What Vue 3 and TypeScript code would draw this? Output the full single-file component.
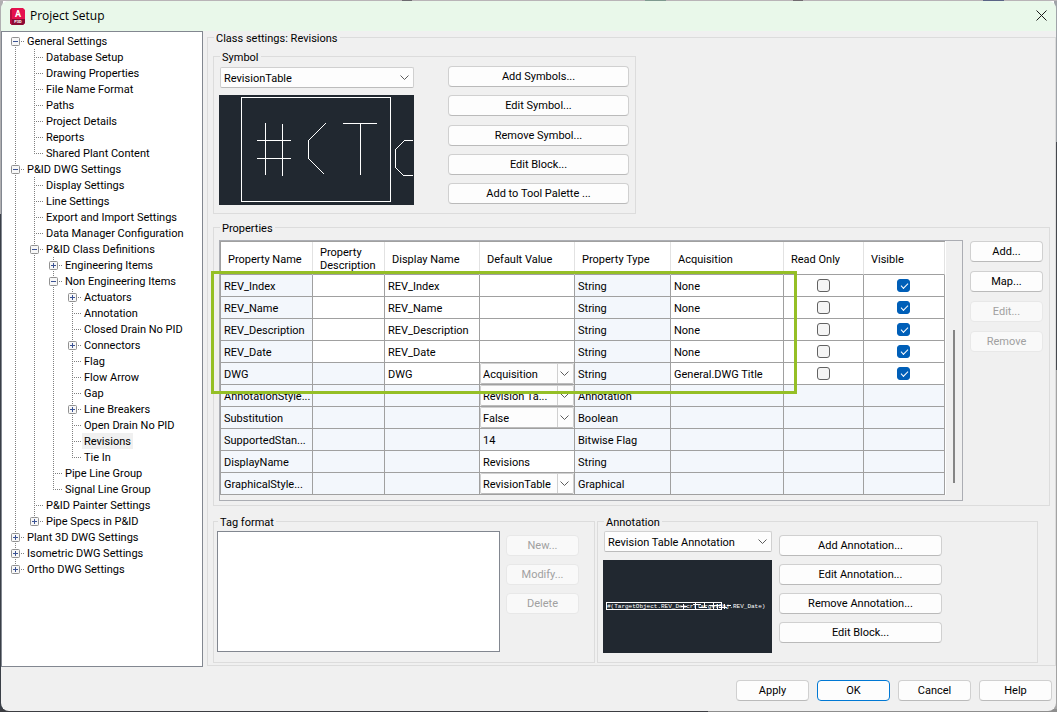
<script setup lang="ts">
import { ref } from 'vue'

interface TreeNode {
  label: string
  children?: TreeNode[]
  collapsed?: boolean
}

interface TreeRow {
  label: string
  level: number
  box: '' | 'plus' | 'minus'
  rails: boolean[]
  up: boolean
  down: boolean
}

interface PropertyRow {
  name: string
  display: string
  value: string
  type: string
  acquisition: string
  shaded: string
  combo?: boolean
  checks?: boolean
}

const leaf = (label: string): TreeNode => ({ label })
const closed = (label: string): TreeNode => ({ label, collapsed: true })

const tree: TreeNode[] = [
  {
    label: 'General Settings',
    children: [
      leaf('Database Setup'),
      leaf('Drawing Properties'),
      leaf('File Name Format'),
      leaf('Paths'),
      leaf('Project Details'),
      leaf('Reports'),
      leaf('Shared Plant Content'),
    ],
  },
  {
    label: 'P&ID DWG Settings',
    children: [
      leaf('Display Settings'),
      leaf('Line Settings'),
      leaf('Export and Import Settings'),
      leaf('Data Manager Configuration'),
      {
        label: 'P&ID Class Definitions',
        children: [
          closed('Engineering Items'),
          {
            label: 'Non Engineering Items',
            children: [
              closed('Actuators'),
              leaf('Annotation'),
              leaf('Closed Drain No PID'),
              closed('Connectors'),
              leaf('Flag'),
              leaf('Flow Arrow'),
              leaf('Gap'),
              closed('Line Breakers'),
              leaf('Open Drain No PID'),
              leaf('Revisions'),
              leaf('Tie In'),
            ],
          },
          leaf('Pipe Line Group'),
          leaf('Signal Line Group'),
        ],
      },
      leaf('P&ID Painter Settings'),
      closed('Pipe Specs in P&ID'),
    ],
  },
  closed('Plant 3D DWG Settings'),
  closed('Isometric DWG Settings'),
  closed('Ortho DWG Settings'),
]

function flatten(nodes: TreeNode[], level: number, rails: boolean[]): TreeRow[] {
  return nodes.flatMap((node, i) => {
    const down = i < nodes.length - 1
    const row: TreeRow = {
      label: node.label,
      level,
      box: node.collapsed ? 'plus' : node.children ? 'minus' : '',
      rails,
      up: level > 0 || i > 0,
      down,
    }
    return [row, ...flatten(node.children ?? [], level + 1, [...rails, down])]
  })
}

const treeRows = flatten(tree, 0, [])
const selected = ref('Revisions')

const headers = [
  'Property Name',
  'Property Description',
  'Display Name',
  'Default Value',
  'Property Type',
  'Acquisition',
  'Read Only',
  'Visible',
]

/* "shaded" holds one flag per column: 1 for a locked cell, 0 for an editable one. */
const rev = (name: string): PropertyRow => ({
  name, display: name, value: '', type: 'String', acquisition: 'None', shaded: '10001000', checks: true,
})
const locked = (name: string, value: string, type: string, combo = false, shaded = '11111111'): PropertyRow => ({
  name, display: '', value, type, acquisition: '', shaded, combo,
})

const properties: PropertyRow[] = [
  rev('REV_Index'),
  rev('REV_Name'),
  rev('REV_Description'),
  rev('REV_Date'),
  { name: 'DWG', display: 'DWG', value: 'Acquisition', type: 'String', acquisition: 'General.DWG Title', shaded: '11001000', combo: true, checks: true },
  locked('AnnotationStyle...', 'Revision Ta...', 'Annotation', true),
  locked('Substitution', 'False', 'Boolean', true),
  locked('SupportedStan...', '14', 'Bitwise Flag'),
  locked('DisplayName', 'Revisions', 'String', false, '11101111'),
  locked('GraphicalStyle...', 'RevisionTable', 'Graphical', true),
]

const tone = (row: PropertyRow, col: number) => ({ shaded: row.shaded[col] === '1' })

const symbolButtons = ['Add Symbols...', 'Edit Symbol...', 'Remove Symbol...', 'Edit Block...', 'Add to Tool Palette ...']
const annotationButtons = ['Add Annotation...', 'Edit Annotation...', 'Remove Annotation...', 'Edit Block...']
</script>

<template>
  <div class="desktop">
    <div class="dialog" role="dialog" aria-labelledby="dialog-title">
      <header class="titlebar">
        <svg class="logo" width="15" height="17" viewBox="0 0 15 17" aria-hidden="true">
          <path d="M2 0H13L15 2V15L13 17H2L0 15V2Z" fill="#e5114e" />
          <path d="M0 11H15V15L13 17H2L0 15Z" fill="#8c0b34" />
          <path d="M0 2L2 0V17L0 15Z" fill="#b80c40" />
          <text x="8" y="9" class="logo-letter">A</text>
          <text x="8" y="15" class="logo-code">P3D</text>
        </svg>
        <h1 id="dialog-title">Project Setup</h1>
        <button class="close" type="button" aria-label="Close">
          <svg width="11" height="11" viewBox="0 0 11 11"><path d="M0.5 0.5L10.5 10.5M10.5 0.5L0.5 10.5" stroke="#1a1a1a" fill="none" /></svg>
        </button>
      </header>

      <div class="body">
        <div class="tree" role="tree" aria-label="Settings">
          <div
            v-for="row in treeRows"
            :key="row.label"
            class="tree-row"
            role="treeitem"
            :aria-level="row.level + 1"
            :aria-selected="row.label === selected"
            :aria-expanded="row.box ? row.box === 'minus' : undefined"
            @click="selected = row.label"
          >
            <span v-for="(rail, i) in row.rails" :key="i" class="guide" :class="{ up: rail, down: rail }"></span>
            <span class="guide stub" :class="{ up: row.up, down: row.down }">
              <svg v-if="row.box" class="box" width="9" height="9" viewBox="0 0 9 9" aria-hidden="true">
                <rect x="0.5" y="0.5" width="8" height="8" rx="1" fill="#f7f7f7" stroke="#919191" />
                <path d="M2 4.5H7" stroke="#3b5394" />
                <path v-if="row.box === 'plus'" d="M4.5 2V7" stroke="#3b5394" />
              </svg>
            </span>
            <span class="tree-label" :class="{ selected: row.label === selected }">{{ row.label }}</span>
          </div>
        </div>

        <fieldset class="group settings">
          <legend>Class settings: Revisions</legend>

          <fieldset class="group symbol">
            <legend>Symbol</legend>
            <div class="preview-column symbol-preview">
              <div class="combo">
                <select aria-label="Symbol"><option>RevisionTable</option></select>
                <svg class="chevron" width="9" height="5" viewBox="0 0 9 5" aria-hidden="true"><path d="M0.5 0.5L4.5 4.5L8.5 0.5" /></svg>
              </div>
              <svg class="drawing" width="195" height="110" viewBox="0 0 195 110" role="img" aria-label="Symbol preview">
                <rect width="195" height="110" fill="#212830" />
                <g fill="none" stroke="#fff" shape-rendering="crispEdges">
                  <path d="M22.5 2.5H171.5V106.5H22.5Z" />
                  <path d="M46.5 28V80M63.5 29V81M38 45.5H72M38 63.5H72" />
                  <path d="M106.5 28.5L89.5 45.5V63.5L105.5 79.5" />
                  <path d="M124 28.5H158M141.5 28V80" />
                  <path d="M194 45.5H185.5L176.5 54.5V72.5L184.5 80.5H194" />
                </g>
              </svg>
            </div>
            <div class="stack spread">
              <button v-for="label in symbolButtons" :key="label" type="button" class="btn">{{ label }}</button>
            </div>
          </fieldset>

          <fieldset class="group properties">
            <legend>Properties</legend>
            <div class="grid-frame">
              <table>
                <colgroup>
                  <col class="c-name" /><col class="c-desc" /><col class="c-text" /><col class="c-text" />
                  <col class="c-type" /><col class="c-acq" /><col class="c-check" /><col class="c-last" />
                </colgroup>
                <thead>
                  <tr><th v-for="h in headers" :key="h" scope="col">{{ h }}</th></tr>
                </thead>
                <tbody>
                  <tr v-for="row in properties" :key="row.name">
                    <td :class="tone(row, 0)">{{ row.name }}</td>
                    <td :class="tone(row, 1)"></td>
                    <td :class="tone(row, 2)">{{ row.display }}</td>
                    <td v-if="row.combo" class="combo-cell">
                      <div class="combo cell-combo">
                        <select :aria-label="row.name + ' default value'"><option>{{ row.value }}</option></select>
                        <svg class="chevron" width="9" height="5" viewBox="0 0 9 5" aria-hidden="true"><path d="M0.5 0.5L4.5 4.5L8.5 0.5" /></svg>
                      </div>
                    </td>
                    <td v-else :class="tone(row, 3)">{{ row.value }}</td>
                    <td :class="tone(row, 4)">{{ row.type }}</td>
                    <td :class="tone(row, 5)">{{ row.acquisition }}</td>
                    <td class="check" :class="tone(row, 6)">
                      <input v-if="row.checks" type="checkbox" :aria-label="row.name + ' read only'" />
                    </td>
                    <td class="check" :class="tone(row, 7)">
                      <input v-if="row.checks" type="checkbox" checked :aria-label="row.name + ' visible'" />
                    </td>
                  </tr>
                </tbody>
              </table>
              <div class="scrollbar"><div class="thumb"></div></div>
              <div class="highlight"></div>
            </div>
            <div class="stack wide-gap small">
              <button type="button" class="btn">Add...</button>
              <button type="button" class="btn">Map...</button>
              <button type="button" class="btn" disabled>Edit...</button>
              <button type="button" class="btn" disabled>Remove</button>
            </div>
          </fieldset>

          <div class="lower">
            <fieldset class="group tags">
              <legend>Tag format</legend>
              <select class="listbox" size="6" aria-label="Tag format"></select>
              <div class="stack small lowered">
                <button type="button" class="btn" disabled>New...</button>
                <button type="button" class="btn" disabled>Modify...</button>
                <button type="button" class="btn" disabled>Delete</button>
              </div>
            </fieldset>

            <fieldset class="group annotation">
              <legend>Annotation</legend>
              <div class="preview-column annotation-preview">
                <div class="combo">
                  <select aria-label="Annotation"><option>Revision Table Annotation</option></select>
                  <svg class="chevron" width="9" height="5" viewBox="0 0 9 5" aria-hidden="true"><path d="M0.5 0.5L4.5 4.5L8.5 0.5" /></svg>
                </div>
                <svg class="drawing" width="169" height="93" viewBox="0 0 169 93" role="img" aria-label="Annotation preview">
                  <rect width="169" height="93" fill="#212830" />
                  <g fill="none" stroke="#fff" shape-rendering="crispEdges">
                    <path d="M3.5 42.5H118.5V49.5H3.5Z" />
                    <path d="M78 46.5H84M80.5 44V49M90 44.5H98M92.5 43V49M96 47.5H104M101.5 43V48M106 45.5H118M110.5 43V49M114.5 44V49M116 47.5H124M121.5 44V49M124 45.5H128" />
                  </g>
                  <text x="4" y="48" class="plot">#(TargetObject.REV_Descr(TargetObj.REV_Date)</text>
                </svg>
              </div>
              <div class="stack lowered annotation-actions">
                <button v-for="label in annotationButtons" :key="label" type="button" class="btn">{{ label }}</button>
              </div>
            </fieldset>
          </div>
        </fieldset>
      </div>

      <footer class="footer">
        <button type="button" class="btn">Apply</button>
        <button type="button" class="btn primary">OK</button>
        <button type="button" class="btn">Cancel</button>
        <button type="button" class="btn">Help</button>
      </footer>
    </div>
  </div>
</template>

<style>
body {
  margin: 0;
}
</style>

<style scoped>
* {
  box-sizing: border-box;
}
.desktop {
  min-height: 100vh;
  padding: 1px;
  display: flex;
  flex-direction: column;
  background:
    linear-gradient(to right, #b9b4b7 0 38%, #6d6a70 38% 39%, #b9b4b7 39% 61%, #7f9a90 61% 63%, #b9b4b7 63% 75%, #716b70 75% 76%, #b9b4b7 76% 93%, #5b6486 93% 95%, #b9b4b7 95%) top / 100% 1px no-repeat,
    linear-gradient(to right, #3c3d42 0 67%, #8e8e8e 67%) bottom / 100% 3px no-repeat,
    linear-gradient(to bottom, #b0afb1 0 30%, #3a3f47 30%) left / 3px 100% no-repeat,
    linear-gradient(to bottom, #9fa3a8 0 20%, #45484e 20% 52%, #a3a3a3 52%) right / 3px 100% no-repeat;
  font-family: Roboto, "Liberation Sans", sans-serif;
  font-size: 11px;
  line-height: 13px;
  color: #000;
}
.dialog {
  flex: 1;
  display: flex;
  flex-direction: column;
  background: #f0f0f0;
  border-radius: 8px;
  overflow: hidden;
}
.titlebar {
  display: flex;
  align-items: center;
  height: 30px;
  padding: 0 9px;
  background: #e9f8ea;
}
.logo {
  margin-right: 5px;
}
.logo-letter,
.logo-code {
  fill: #fff;
  font-weight: 700;
  text-anchor: middle;
}
.logo-letter {
  font-size: 9px;
}
.logo-code {
  font-size: 4px;
}
h1 {
  margin: 0;
  flex: 1;
  font: 400 12px/16px "Open Sans", "Noto Sans", sans-serif;
}
.close {
  display: flex;
  padding: 0 0 2px;
  border: 0;
  background: none;
}
.body {
  flex: 1;
  display: flex;
}
.tree {
  flex: none;
  width: 202px;
  padding: 1px 0 0 4px;
  border: 1px solid #828790;
  background: #fff;
}
.tree-row {
  display: flex;
  height: 16px;
  white-space: nowrap;
}
.guide {
  --dots: repeating-linear-gradient(to bottom, #808080 0 1px, transparent 1px 2px);
  position: relative;
  flex: none;
  width: 19px;
}
.guide.up {
  background: var(--dots) 9px 0 / 1px 8px no-repeat;
}
.guide.up.down {
  background: var(--dots) 9px 0 / 1px 16px no-repeat;
}
.guide.down:not(.up) {
  background: var(--dots) 9px 8px / 1px 8px no-repeat;
}
.stub::after {
  content: "";
  position: absolute;
  left: 9px;
  right: 0;
  top: 8px;
  height: 1px;
  background: repeating-linear-gradient(to right, #808080 0 1px, transparent 1px 2px);
}
.box {
  position: absolute;
  left: 5px;
  top: 4px;
  z-index: 1;
}
.tree-label {
  padding: 2px 2px 0;
  line-height: 14px;
}
.tree-label.selected {
  background: #f0f0f0;
}
.group {
  display: flex;
  margin: 0;
  min-width: 0;
  border: 1px solid #dcdcdc;
}
legend {
  margin-left: 1px;
  padding: 2px 2px 0;
  line-height: 11px;
}
.settings {
  flex: 1;
  flex-direction: column;
  margin: 0 0 1px 4px;
  padding: 6px 5px 2px;
}
.symbol {
  align-self: flex-start;
  gap: 34px;
  padding: 3px 6px 8px 5px;
}
.preview-column {
  display: flex;
  flex-direction: column;
}
.symbol-preview {
  width: 195px;
  gap: 7px;
  padding-top: 1px;
}
.annotation-preview {
  width: 169px;
  gap: 8px;
}
.drawing {
  display: block;
}
.plot {
  fill: #fff;
  font: 6px "Liberation Mono", monospace;
}
.combo {
  position: relative;
  margin-left: 1px;
}
select {
  appearance: none;
  display: block;
  width: 100%;
  height: 21px;
  margin: 0;
  padding: 2px 20px 0 3px;
  border: 1px solid #d0d0d0;
  border-bottom-color: #bcbcbc;
  border-radius: 2px;
  background: #fdfdfd;
  color: #000;
  font: inherit;
}
.chevron {
  position: absolute;
  right: 5px;
  top: 8px;
  fill: none;
  stroke: #5c5c5c;
  pointer-events: none;
}
.stack {
  display: flex;
  flex-direction: column;
  gap: 8px;
}
.stack.spread {
  width: 181px;
  justify-content: space-between;
  gap: 0;
  padding-bottom: 1px;
}
.stack.wide-gap {
  gap: 9px;
  padding-top: 1px;
}
.stack.small {
  width: 73px;
  flex: none;
}
.stack.lowered {
  padding-top: 4px;
}
.btn {
  height: 21px;
  padding: 0 4px;
  border: 1px solid #d0d0d0;
  border-bottom-color: #bababa;
  border-radius: 4px;
  background: #fdfdfd;
  color: #000;
  font: inherit;
  white-space: nowrap;
}
.btn:disabled {
  border-color: #e8e8e8;
  background: #f9f9f9;
  color: #a0a0a0;
}
.btn.primary {
  border-color: #0078d4;
}
.properties {
  gap: 7px;
  margin-top: 7px;
  padding: 6px 6px 4px 5px;
}
.grid-frame {
  position: relative;
  flex: 1;
  display: flex;
  padding-bottom: 5px;
  border: 1px solid #abadb3;
}
table {
  flex: none;
  width: 725px;
  table-layout: fixed;
  border-collapse: separate;
  border-spacing: 0;
  border: 0 solid #a0a0a0;
  border-width: 1px 0 0 1px;
}
.c-name { width: 92px; }
.c-desc { width: 72px; }
.c-text { width: 95px; }
.c-type { width: 96px; }
.c-acq { width: 113px; }
.c-check { width: 80px; }
.c-last { width: 81px; }
th,
td {
  border: 0 solid #a0a0a0;
  border-width: 0 1px 1px 0;
  background: #fff;
  text-align: left;
  font-weight: 400;
}
th {
  height: 33px;
  padding: 2px 7px 0;
  border-right-color: #e2e2e2;
}
td {
  height: 22px;
  padding: 2px 3px 0;
  white-space: nowrap;
}
td.shaded {
  background: #f3f7fc;
}
td.combo-cell {
  padding: 0;
}
td.check {
  padding: 0;
  text-align: center;
}
td.check:last-child {
  padding-right: 1px;
}
.cell-combo {
  margin: 0;
}
.cell-combo select {
  padding: 2px 16px 0 2px;
  background: linear-gradient(#d0d0d0, #d0d0d0) right 15px top / 1px 100% no-repeat #fdfdfd;
}
input[type="checkbox"] {
  appearance: none;
  display: block;
  width: 13px;
  height: 13px;
  margin: 0 auto;
  border: 1px solid #626262;
  border-radius: 3px;
  background: #f5f5f5;
}
input[type="checkbox"]:checked {
  border-color: #005fb8;
  background: #005fb8;
}
input[type="checkbox"]:checked::after {
  content: "";
  display: block;
  width: 6px;
  height: 3px;
  margin: 3px 0 0 3px;
  border: solid #fff;
  border-width: 0 0 1px 1px;
  transform: rotate(-45deg);
}
.scrollbar {
  flex: 1;
  display: flex;
  justify-content: center;
  padding: 89px 0 12px;
  border-left: 1px solid #fff;
}
.thumb {
  width: 2px;
  background: #858585;
}
.highlight {
  position: absolute;
  left: -9px;
  top: 30px;
  width: 586px;
  height: 123px;
  border: 3px solid #95bf26;
  pointer-events: none;
}
.lower {
  display: flex;
  gap: 2px;
  margin-top: 9px;
}
.tags {
  gap: 6px;
  padding: 3px 15px 10px 3px;
}
.listbox {
  width: 283px;
  height: 121px;
  border: 1px solid #828790;
  border-radius: 0;
  background: #fff;
}
.annotation {
  gap: 7px;
  padding: 3px 95px 9px 5px;
}
.annotation-actions {
  width: 163px;
}
.footer {
  display: flex;
  justify-content: flex-end;
  gap: 8px;
  padding: 13px 4px 10px;
}
.footer .btn {
  width: 73px;
}
</style>
